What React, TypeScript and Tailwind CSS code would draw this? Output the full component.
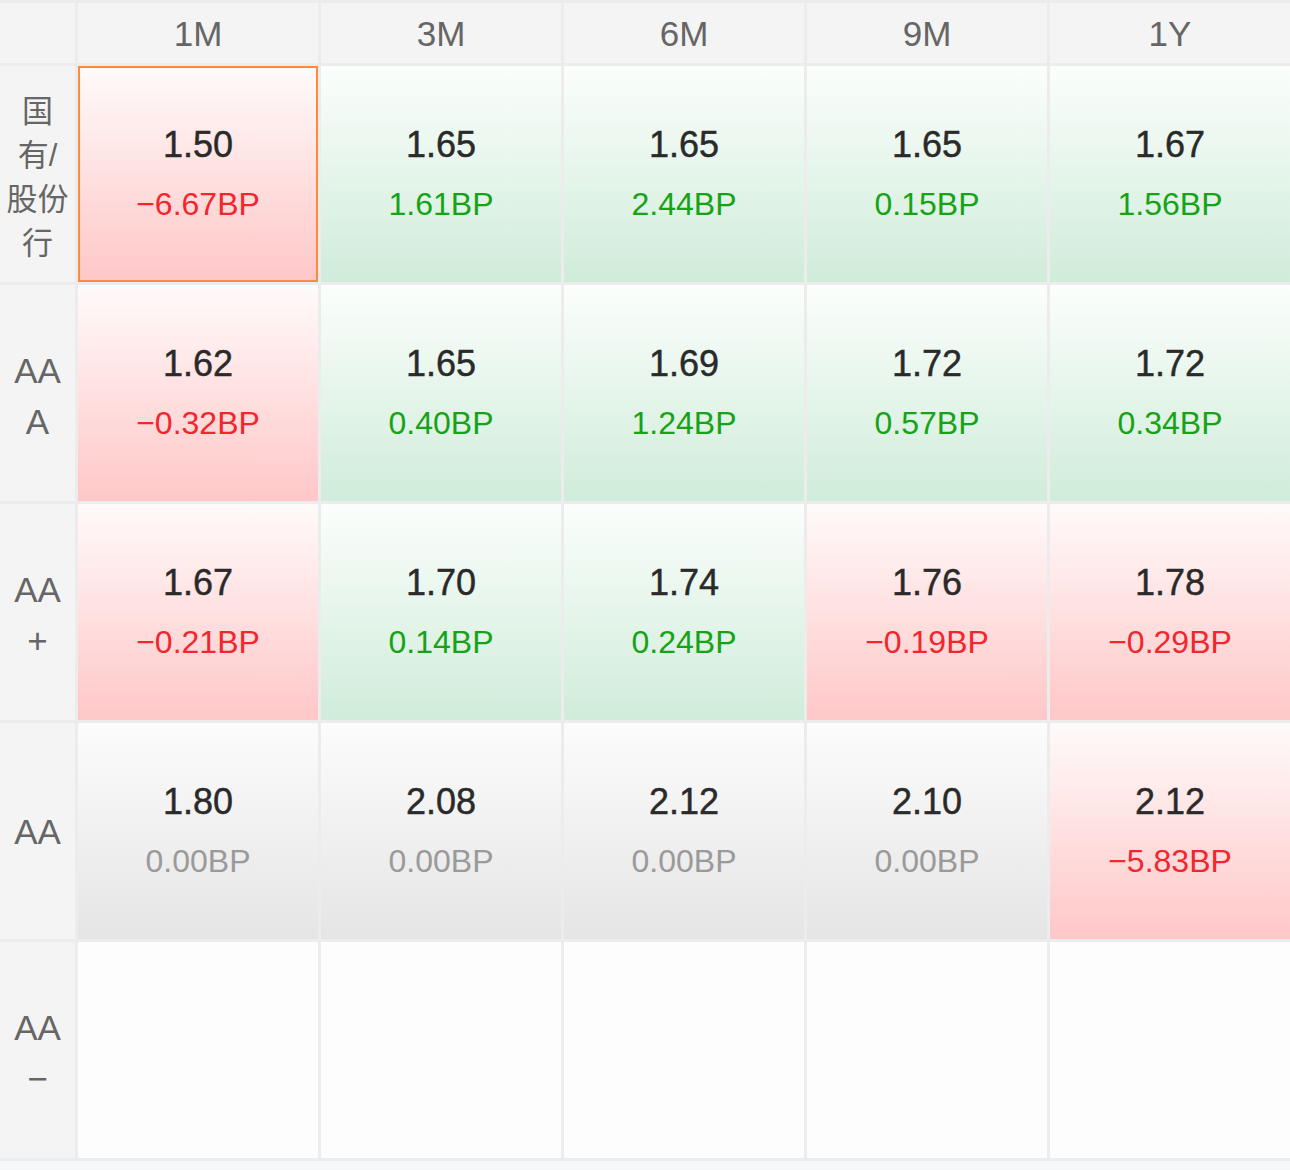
import React from "react";

type Tone = "red" | "green" | "gray" | "empty";
type Cell = { v?: string; c?: string; t: Tone; sel?: boolean };

const cols = ["1M", "3M", "6M", "9M", "1Y"];

const rows: { label: React.ReactNode; cjk?: boolean; single?: boolean; cells: Cell[] }[] = [
  {
    label: (
      <>
        国<br />有/<br />股份<br />行
      </>
    ),
    cjk: true,
    cells: [
      { v: "1.50", c: "−6.67BP", t: "red", sel: true },
      { v: "1.65", c: "1.61BP", t: "green" },
      { v: "1.65", c: "2.44BP", t: "green" },
      { v: "1.65", c: "0.15BP", t: "green" },
      { v: "1.67", c: "1.56BP", t: "green" },
    ],
  },
  {
    label: (
      <>
        AA<br />A
      </>
    ),
    cells: [
      { v: "1.62", c: "−0.32BP", t: "red" },
      { v: "1.65", c: "0.40BP", t: "green" },
      { v: "1.69", c: "1.24BP", t: "green" },
      { v: "1.72", c: "0.57BP", t: "green" },
      { v: "1.72", c: "0.34BP", t: "green" },
    ],
  },
  {
    label: (
      <>
        AA<br />+
      </>
    ),
    cells: [
      { v: "1.67", c: "−0.21BP", t: "red" },
      { v: "1.70", c: "0.14BP", t: "green" },
      { v: "1.74", c: "0.24BP", t: "green" },
      { v: "1.76", c: "−0.19BP", t: "red" },
      { v: "1.78", c: "−0.29BP", t: "red" },
    ],
  },
  {
    label: <>AA</>,
    single: true,
    cells: [
      { v: "1.80", c: "0.00BP", t: "gray" },
      { v: "2.08", c: "0.00BP", t: "gray" },
      { v: "2.12", c: "0.00BP", t: "gray" },
      { v: "2.10", c: "0.00BP", t: "gray" },
      { v: "2.12", c: "−5.83BP", t: "red" },
    ],
  },
  {
    label: (
      <>
        AA<br />−
      </>
    ),
    cells: [
      { t: "empty" },
      { t: "empty" },
      { t: "empty" },
      { t: "empty" },
      { t: "empty" },
    ],
  },
];

const bg: Record<Tone, string> = {
  red: "bg-gradient-to-b from-[#fffafa] to-[#ffc7c8]",
  green: "bg-gradient-to-b from-[#fbfefc] to-[#d0ecda]",
  gray: "bg-gradient-to-b from-[#fcfcfc] to-[#e5e5e5]",
  empty: "bg-[#fdfdfd]",
};

const fg: Record<Tone, string> = {
  red: "text-[#f2262c]",
  green: "text-[#16a316]",
  gray: "text-[#9a9a9a]",
  empty: "",
};

export default function App() {
  return (
    <div
      className="w-[1290px] h-[1170px] bg-[#f6f7f9] overflow-hidden"
      style={{ fontFamily: '"Liberation Sans", "Noto Sans CJK SC", Arial, sans-serif' }}
    >
      <div className="grid grid-cols-[75px_repeat(5,240px)] grid-rows-[60px_repeat(5,216px)] gap-[3px] py-[3px] bg-[#ececec]">
        <div className="bg-[#f4f4f4]" />
        {cols.map((c) => (
          <div
            key={c}
            className="bg-[#f4f4f4] flex items-center justify-center text-[35px] text-[#666666] leading-none"
          >
            {c}
          </div>
        ))}
        {rows.map((r, i) => (
          <React.Fragment key={i}>
            <div
              className={`bg-[#f4f4f4] flex items-center justify-center text-center text-[#666666] ${
                r.cjk
                  ? "text-[31px] leading-[44px] pt-[7px]"
                  : r.single
                  ? "text-[35px] leading-[50px] pt-[2px]"
                  : "text-[35px] leading-[51px] pt-[6px]"
              }`}
            >
              <div>{r.label}</div>
            </div>
            {r.cells.map((cell, j) => (
              <div
                key={j}
                className={`${bg[cell.t]} flex flex-col items-center justify-center ${
                  cell.sel ? "border-2 border-[#ff8a3d]" : ""
                }`}
              >
                {cell.v && (
                  <>
                    <div className="text-[36px] leading-[44px] text-[#2a2a2a] [-webkit-text-stroke:0.45px_#2a2a2a]">
                      {cell.v}
                    </div>
                    <div className={`mt-[15px] text-[32px] leading-[44px] ${fg[cell.t]}`}>{cell.c}</div>
                  </>
                )}
              </div>
            ))}
          </React.Fragment>
        ))}
      </div>
    </div>
  );
}
